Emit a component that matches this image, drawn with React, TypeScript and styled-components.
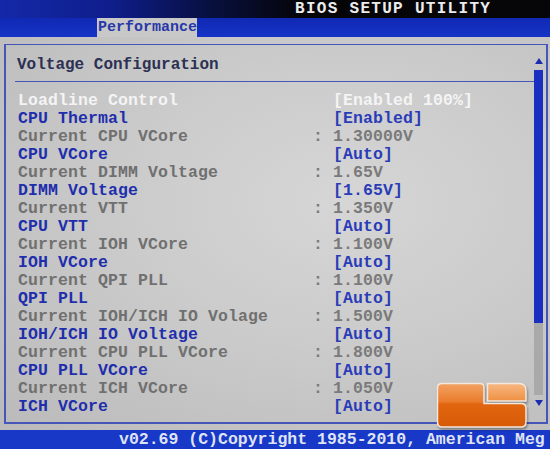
import React from "react";
import styled, { createGlobalStyle } from "styled-components";

const FONT = `"Liberation Mono", "DejaVu Sans Mono", monospace`;

const Global = createGlobalStyle`
  html, body { margin: 0; padding: 0; background: #000; }
  body { width: 550px; height: 449px; overflow: hidden; }
`;

const Screen = styled.div`
  position: relative;
  width: 550px;
  height: 449px;
  display: flex;
  flex-direction: column;
  font-family: ${FONT};
  font-weight: 700;
  overflow: hidden;
`;

const TopBar = styled.header`
  flex: none;
  height: 18px;
  display: flex;
  align-items: center;
  padding-left: 295px;
  background: linear-gradient(90deg, #1428a8 0%, #0f1e8c 20%, #081040 38%, #050508 55%, #060609 100%);
`;

const TopTitle = styled.span`
  font-size: 16px;
  line-height: 18px;
  letter-spacing: 1.3px;
  color: #ececec;
  white-space: pre;
`;

const TabBar = styled.nav`
  flex: none;
  height: 19px;
  display: flex;
  padding-left: 97px;
  background: linear-gradient(180deg, #1029b4 0%, #1534c6 100%);
`;

const Tab = styled.div`
  background: #c8c8c8;
  color: #2838a8;
  font-size: 15px;
  line-height: 19px;
  padding: 0 1px;
  width: 100px;
  box-sizing: border-box;
`;

const Main = styled.main`
  flex: 1;
  display: flex;
  padding: 7px 2px 6px 4px;
  background: radial-gradient(ellipse at 62% 42%, #d6d6d6 0%, #cbcbcb 45%, #bababa 100%);
`;

const Panel = styled.section`
  flex: 1;
  display: flex;
  border: 2px solid #4656b8;
  border-top-width: 1px;
`;

const Content = styled.div`
  flex: 1;
  display: flex;
  flex-direction: column;
  padding-top: 11px;
`;

const Header = styled.div`
  margin-left: 9px;
  padding: 0 0 7px 2px;
  border-bottom: 1px solid #4656b8;
  margin-bottom: 10px;
`;

const Title = styled.h1`
  margin: 0;
  font-size: 16px;
  line-height: 18px;
  font-weight: 700;
  color: #2c3052;
`;

const Rows = styled.div`
  display: flex;
  flex-direction: column;
  padding-left: 12px;
`;

type Tone = "white" | "blue" | "gray";

const toneColor: Record<Tone, string> = {
  white: "#f4f4f4",
  blue: "#1e2eac",
  gray: "#707070",
};

const Row = styled.div`
  display: grid;
  grid-template-columns: 295px 1fr;
  height: 18px;
  font-size: 16.5px;
  line-height: 18px;
  letter-spacing: 0.1px;
  white-space: pre;
`;

const Label = styled.span<{ $tone: Tone }>`
  color: ${(p) => toneColor[p.$tone]};
`;

const Value = styled.span<{ $tone: Tone }>`
  color: ${(p) => (p.$tone === "gray" ? "#7a7a7a" : p.$tone === "blue" ? "#2a3cb8" : "#f4f4f4")};
`;

const ScrollCol = styled.div`
  flex: none;
  width: 9px;
  margin-right: 3px;
  display: flex;
  flex-direction: column;
  align-items: center;
  padding-top: 13px;
`;

const Arrow = styled.div<{ $dir: "up" | "down" }>`
  width: 0;
  height: 0;
  border-left: 4px solid transparent;
  border-right: 4px solid transparent;
  ${(p) =>
    p.$dir === "up"
      ? "border-bottom: 6px solid #1c2cb0; margin-bottom: 6px;"
      : "border-top: 6px solid #1c2cb0; margin-top: 5px;"}
`;

const Thumb = styled.div`
  width: 9px;
  height: 253px;
  background: #1a2ec0;
`;

const Track = styled.div`
  width: 9px;
  height: 72px;
  background: #a9a9a9;
`;

const BottomBar = styled.footer`
  flex: none;
  height: 19px;
  padding-left: 119px;
  background: #1838c8;
  color: #dfe3f4;
  font-size: 16.5px;
  line-height: 19px;
  white-space: pre;
  overflow: hidden;
`;

const Logo = styled.div`
  position: absolute;
  left: 436px;
  top: 382px;
  width: 92px;
  height: 47px;
  filter: drop-shadow(1px 2px 1px rgba(0, 0, 0, 0.35));
`;

const rows: { label: string; value: string; tone: Tone }[] = [
  { label: "Loadline Control", value: "  [Enabled 100%]", tone: "white" },
  { label: "CPU Thermal", value: "  [Enabled]", tone: "blue" },
  { label: "Current CPU VCore", value: ": 1.30000V", tone: "gray" },
  { label: "CPU VCore", value: "  [Auto]", tone: "blue" },
  { label: "Current DIMM Voltage", value: ": 1.65V", tone: "gray" },
  { label: "DIMM Voltage", value: "  [1.65V]", tone: "blue" },
  { label: "Current VTT", value: ": 1.350V", tone: "gray" },
  { label: "CPU VTT", value: "  [Auto]", tone: "blue" },
  { label: "Current IOH VCore", value: ": 1.100V", tone: "gray" },
  { label: "IOH VCore", value: "  [Auto]", tone: "blue" },
  { label: "Current QPI PLL", value: ": 1.100V", tone: "gray" },
  { label: "QPI PLL", value: "  [Auto]", tone: "blue" },
  { label: "Current IOH/ICH IO Volage", value: ": 1.500V", tone: "gray" },
  { label: "IOH/ICH IO Voltage", value: "  [Auto]", tone: "blue" },
  { label: "Current CPU PLL VCore", value: ": 1.800V", tone: "gray" },
  { label: "CPU PLL VCore", value: "  [Auto]", tone: "blue" },
  { label: "Current ICH VCore", value: ": 1.050V", tone: "gray" },
  { label: "ICH VCore", value: "  [Auto]", tone: "blue" },
];

const LogoMark = () => (
  <svg width="92" height="47" viewBox="0 0 92 47">
    <defs>
      <linearGradient id="lrL" x1="0" y1="0" x2="0" y2="1">
        <stop offset="0" stopColor="#f2a262" />
        <stop offset="0.42" stopColor="#ea7c2c" />
        <stop offset="0.47" stopColor="#e2660f" />
        <stop offset="1" stopColor="#d75a08" />
      </linearGradient>
      <linearGradient id="lrR" x1="0" y1="0" x2="0" y2="1">
        <stop offset="0" stopColor="#f7b884" />
        <stop offset="1" stopColor="#ef9042" />
      </linearGradient>
    </defs>
    <path
      d="M6 1.5 H44 Q48 1.5 48 5.5 V21.5 H85 Q90 21.5 90 26.5 V40 Q90 45 85 45 H6 Q1.5 45 1.5 40 V6 Q1.5 1.5 6 1.5 Z"
      fill="url(#lrL)"
      stroke="#f4e8de"
      strokeWidth="1.5"
    />
    <path
      d="M51.5 1.5 H83 Q90 1.5 90 8.5 V19 H51.5 Z"
      fill="url(#lrR)"
      stroke="#f4e8de"
      strokeWidth="1.5"
    />
  </svg>
);

export default function App() {
  return (
    <>
      <Global />
      <Screen>
        <TopBar>
          <TopTitle>BIOS SETUP UTILITY</TopTitle>
        </TopBar>
        <TabBar>
          <Tab>Performance</Tab>
        </TabBar>
        <Main>
          <Panel>
            <Content>
              <Header>
                <Title>Voltage Configuration</Title>
              </Header>
              <Rows>
                {rows.map((r) => (
                  <Row key={r.label}>
                    <Label $tone={r.tone}>{r.label}</Label>
                    <Value $tone={r.tone}>{r.value}</Value>
                  </Row>
                ))}
              </Rows>
            </Content>
            <ScrollCol>
              <Arrow $dir="up" />
              <Thumb />
              <Track />
              <Arrow $dir="down" />
            </ScrollCol>
          </Panel>
        </Main>
        <BottomBar>v02.69 (C)Copyright 1985-2010, American Meg</BottomBar>
        <Logo>
          <LogoMark />
        </Logo>
      </Screen>
    </>
  );
}
